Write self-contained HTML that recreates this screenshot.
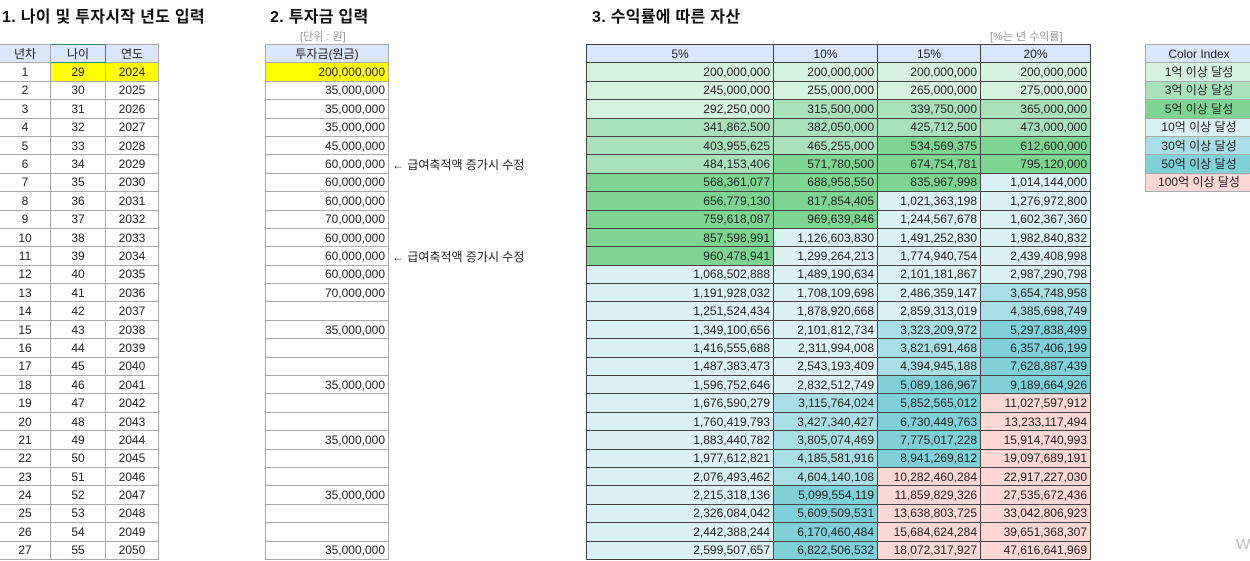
<!DOCTYPE html>
<html><head><meta charset="utf-8"><style>
body{margin:0;width:1250px;height:561px;background:#fff;position:relative;overflow:hidden;font-family:"Liberation Sans","Noto Sans CJK KR",sans-serif;color:#222}
.t{position:absolute;font-weight:bold;font-size:16px;top:3px;color:#111;letter-spacing:0.3px}
.u{position:absolute;font-size:11px;color:#999;top:28px}
table{position:absolute;border-collapse:collapse;table-layout:fixed;font-size:12px;top:44px}
td{height:17.4px;padding:0 3px;border:1px solid #aaa;white-space:nowrap;overflow:hidden;line-height:16px}
.c td{text-align:center}
.r td{text-align:right}
tr.h td{background:#d9e6fb;text-align:center}
.y{background:#ffff00}
.k td{border-color:#444}
.a{background:#d6f1dd}.b{background:#a9e2ba}.c3{background:#7ed593}.d{background:#dbf1f3}.e{background:#aadee5}.f{background:#80d0d8}.g{background:#fcd7d3}
.n{position:absolute;left:392px;font-size:12px}
</style></head><body>
<div class="t" style="left:2px">1. 나이 및 투자시작 년도 입력</div>
<div class="t" style="left:270px">2. 투자금 입력</div>
<div class="t" style="left:592px">3. 수익률에 따른 자산</div>
<div class="u" style="left:300px">[단위 : 원]</div>
<div class="u" style="left:990px">[%는 년 수익률]</div>

<table class="c" style="left:-1px;width:159px"><colgroup><col style="width:51px"><col style="width:55px"><col style="width:53px"></colgroup>
<tr class="h"><td>년차</td><td style="border:1px solid #3a8a5a">나이</td><td>연도</td></tr>
<tr><td>1</td><td class="y">29</td><td class="y">2024</td></tr>
<tr><td>2</td><td>30</td><td>2025</td></tr><tr><td>3</td><td>31</td><td>2026</td></tr><tr><td>4</td><td>32</td><td>2027</td></tr><tr><td>5</td><td>33</td><td>2028</td></tr><tr><td>6</td><td>34</td><td>2029</td></tr><tr><td>7</td><td>35</td><td>2030</td></tr><tr><td>8</td><td>36</td><td>2031</td></tr><tr><td>9</td><td>37</td><td>2032</td></tr><tr><td>10</td><td>38</td><td>2033</td></tr><tr><td>11</td><td>39</td><td>2034</td></tr><tr><td>12</td><td>40</td><td>2035</td></tr><tr><td>13</td><td>41</td><td>2036</td></tr><tr><td>14</td><td>42</td><td>2037</td></tr><tr><td>15</td><td>43</td><td>2038</td></tr><tr><td>16</td><td>44</td><td>2039</td></tr><tr><td>17</td><td>45</td><td>2040</td></tr><tr><td>18</td><td>46</td><td>2041</td></tr><tr><td>19</td><td>47</td><td>2042</td></tr><tr><td>20</td><td>48</td><td>2043</td></tr><tr><td>21</td><td>49</td><td>2044</td></tr><tr><td>22</td><td>50</td><td>2045</td></tr><tr><td>23</td><td>51</td><td>2046</td></tr><tr><td>24</td><td>52</td><td>2047</td></tr><tr><td>25</td><td>53</td><td>2048</td></tr><tr><td>26</td><td>54</td><td>2049</td></tr><tr><td>27</td><td>55</td><td>2050</td></tr>
</table>

<table class="r" style="left:265px;width:124px">
<tr class="h"><td>투자금(원금)</td></tr>
<tr><td class="y">200,000,000</td></tr>
<tr><td>35,000,000</td></tr><tr><td>35,000,000</td></tr><tr><td>35,000,000</td></tr><tr><td>45,000,000</td></tr><tr><td>60,000,000</td></tr><tr><td>60,000,000</td></tr><tr><td>60,000,000</td></tr><tr><td>70,000,000</td></tr><tr><td>60,000,000</td></tr><tr><td>60,000,000</td></tr><tr><td>60,000,000</td></tr><tr><td>70,000,000</td></tr><tr><td></td></tr><tr><td>35,000,000</td></tr><tr><td></td></tr><tr><td></td></tr><tr><td>35,000,000</td></tr><tr><td></td></tr><tr><td></td></tr><tr><td>35,000,000</td></tr><tr><td></td></tr><tr><td></td></tr><tr><td>35,000,000</td></tr><tr><td></td></tr><tr><td></td></tr><tr><td>35,000,000</td></tr>
</table>
<div class="n" style="top:156px">← 급여축적액 증가시 수정</div>
<div class="n" style="top:248px">← 급여축적액 증가시 수정</div>

<table class="r k" style="left:586px;width:504px"><colgroup><col style="width:187px"><col style="width:104px"><col style="width:103px"><col style="width:110px"></colgroup>
<tr class="h"><td>5%</td><td>10%</td><td>15%</td><td>20%</td></tr>
<tr><td class="a">200,000,000</td><td class="a">200,000,000</td><td class="a">200,000,000</td><td class="a">200,000,000</td></tr>
<tr><td class="a">245,000,000</td><td class="a">255,000,000</td><td class="a">265,000,000</td><td class="a">275,000,000</td></tr>
<tr><td class="a">292,250,000</td><td class="b">315,500,000</td><td class="b">339,750,000</td><td class="b">365,000,000</td></tr>
<tr><td class="b">341,862,500</td><td class="b">382,050,000</td><td class="b">425,712,500</td><td class="b">473,000,000</td></tr>
<tr><td class="b">403,955,625</td><td class="b">465,255,000</td><td class="c3">534,569,375</td><td class="c3">612,600,000</td></tr>
<tr><td class="b">484,153,406</td><td class="c3">571,780,500</td><td class="c3">674,754,781</td><td class="c3">795,120,000</td></tr>
<tr><td class="c3">568,361,077</td><td class="c3">688,958,550</td><td class="c3">835,967,998</td><td class="d">1,014,144,000</td></tr>
<tr><td class="c3">656,779,130</td><td class="c3">817,854,405</td><td class="d">1,021,363,198</td><td class="d">1,276,972,800</td></tr>
<tr><td class="c3">759,618,087</td><td class="c3">969,639,846</td><td class="d">1,244,567,678</td><td class="d">1,602,367,360</td></tr>
<tr><td class="c3">857,598,991</td><td class="d">1,126,603,830</td><td class="d">1,491,252,830</td><td class="d">1,982,840,832</td></tr>
<tr><td class="c3">960,478,941</td><td class="d">1,299,264,213</td><td class="d">1,774,940,754</td><td class="d">2,439,408,998</td></tr>
<tr><td class="d">1,068,502,888</td><td class="d">1,489,190,634</td><td class="d">2,101,181,867</td><td class="d">2,987,290,798</td></tr>
<tr><td class="d">1,191,928,032</td><td class="d">1,708,109,698</td><td class="d">2,486,359,147</td><td class="e">3,654,748,958</td></tr>
<tr><td class="d">1,251,524,434</td><td class="d">1,878,920,668</td><td class="d">2,859,313,019</td><td class="e">4,385,698,749</td></tr>
<tr><td class="d">1,349,100,656</td><td class="d">2,101,812,734</td><td class="e">3,323,209,972</td><td class="f">5,297,838,499</td></tr>
<tr><td class="d">1,416,555,688</td><td class="d">2,311,994,008</td><td class="e">3,821,691,468</td><td class="f">6,357,406,199</td></tr>
<tr><td class="d">1,487,383,473</td><td class="d">2,543,193,409</td><td class="e">4,394,945,188</td><td class="f">7,628,887,439</td></tr>
<tr><td class="d">1,596,752,646</td><td class="d">2,832,512,749</td><td class="f">5,089,186,967</td><td class="f">9,189,664,926</td></tr>
<tr><td class="d">1,676,590,279</td><td class="e">3,115,764,024</td><td class="f">5,852,565,012</td><td class="g">11,027,597,912</td></tr>
<tr><td class="d">1,760,419,793</td><td class="e">3,427,340,427</td><td class="f">6,730,449,763</td><td class="g">13,233,117,494</td></tr>
<tr><td class="d">1,883,440,782</td><td class="e">3,805,074,469</td><td class="f">7,775,017,228</td><td class="g">15,914,740,993</td></tr>
<tr><td class="d">1,977,612,821</td><td class="e">4,185,581,916</td><td class="f">8,941,269,812</td><td class="g">19,097,689,191</td></tr>
<tr><td class="d">2,076,493,462</td><td class="e">4,604,140,108</td><td class="g">10,282,460,284</td><td class="g">22,917,227,030</td></tr>
<tr><td class="d">2,215,318,136</td><td class="f">5,099,554,119</td><td class="g">11,859,829,326</td><td class="g">27,535,672,436</td></tr>
<tr><td class="d">2,326,084,042</td><td class="f">5,609,509,531</td><td class="g">13,638,803,725</td><td class="g">33,042,806,923</td></tr>
<tr><td class="d">2,442,388,244</td><td class="f">6,170,460,484</td><td class="g">15,684,624,284</td><td class="g">39,651,368,307</td></tr>
<tr><td class="d">2,599,507,657</td><td class="f">6,822,506,532</td><td class="g">18,072,317,927</td><td class="g">47,616,641,969</td></tr>
</table>

<table class="c" style="left:1145px;width:108px">
<tr class="h"><td>Color Index</td></tr>
<tr><td class="a">1억 이상 달성</td></tr>
<tr><td class="b">3억 이상 달성</td></tr>
<tr><td class="c3">5억 이상 달성</td></tr>
<tr><td class="d">10억 이상 달성</td></tr>
<tr><td class="e">30억 이상 달성</td></tr>
<tr><td class="f">50억 이상 달성</td></tr>
<tr><td class="g">100억 이상 달성</td></tr>
</table>
<div style="position:absolute;left:1236px;top:536px;font-size:15px;color:#bbb">W</div>
</body></html>
